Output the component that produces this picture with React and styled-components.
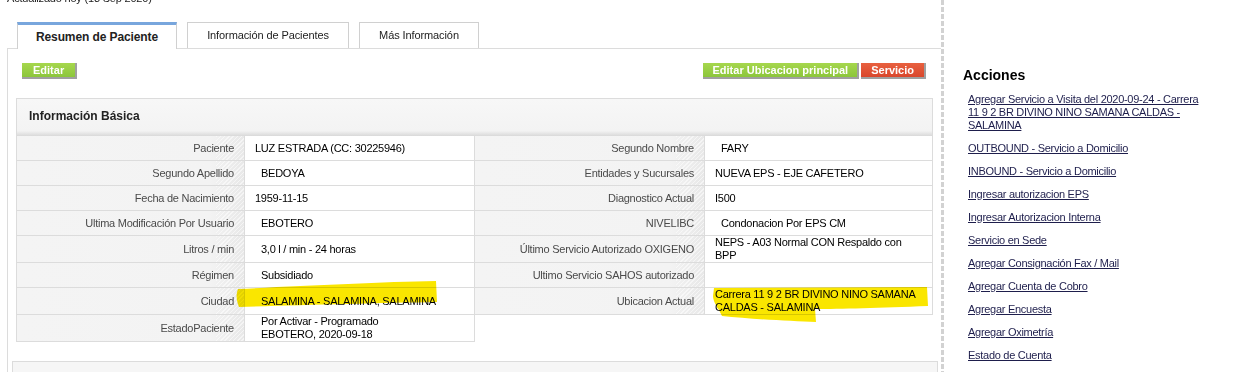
import React from "react";
import styled, { createGlobalStyle } from "styled-components";

const GlobalStyle = createGlobalStyle`
  html, body {
    margin: 0;
    padding: 0;
    background: #fff;
  }
  body {
    font-family: "Liberation Sans", Arial, sans-serif;
    font-size: 11px;
    color: #000;
    overflow: hidden;
  }
`;

const Page = styled.div`
  position: relative;
  display: flex;
  width: 1257px;
  height: 372px;
  overflow: hidden;
`;

const Main = styled.div`
  flex: 0 0 934px;
  padding-left: 7px;
`;

const Updated = styled.div`
  margin-top: -8px;
  line-height: 13px;
  color: #222;
  letter-spacing: -0.2px;
`;

const Tabs = styled.div`
  display: flex;
  align-items: flex-end;
  gap: 10px;
  height: 26px;
  margin: 17px 0 0 10px;
`;

const Tab = styled.div`
  box-sizing: border-box;
  width: ${({ $w }) => $w}px;
  height: ${({ $active }) => ($active ? 27 : 26)}px;
  margin-bottom: ${({ $active }) => ($active ? -1 : 0)}px;
  position: relative;
  z-index: ${({ $active }) => ($active ? 1 : 0)};
  display: flex;
  align-items: center;
  justify-content: center;
  background: #fff;
  border: 1px solid #d0d0d0;
  border-bottom: none;
  border-top: ${({ $active }) => ($active ? "3px solid #78a6dd" : "1px solid #d0d0d0")};
  font-size: ${({ $active }) => ($active ? 12 : 11)}px;
  font-weight: ${({ $active }) => ($active ? "bold" : "normal")};
  letter-spacing: -0.1px;
  color: #222;
  padding-bottom: ${({ $active }) => ($active ? 1 : 2)}px;
`;

const Panel = styled.div`
  border-top: 1px solid #dcdcdc;
  border-left: 1px solid #dcdcdc;
  height: 400px;
`;

const ButtonRow = styled.div`
  display: flex;
  justify-content: space-between;
  padding: 14px 15px 0 14px;
`;

const ButtonGroup = styled.div`
  display: flex;
  gap: 2px;
`;

const Button = styled.div`
  box-sizing: border-box;
  height: 16px;
  line-height: 14px;
  padding: 0 ${({ $pad }) => $pad || 10}px;
  font-size: 11px;
  font-weight: bold;
  color: #fff;
  border-right: 2px solid #a0a0a0;
  border-bottom: 2px solid #a0a0a0;
  background: ${({ $red }) =>
    $red
      ? "linear-gradient(#e8603f, #d9472c)"
      : "linear-gradient(#a6d74d, #8cc63b)"};
`;

const InfoBox = styled.div`
  margin: 19px 8px 0 8px;
`;

const BoxHeader = styled.div`
  box-sizing: border-box;
  height: 38px;
  display: flex;
  align-items: center;
  padding: 0 12px 3px;
  border: 1px solid #dcdcdc;
  border-bottom: none;
  background: linear-gradient(#f7f7f7 0%, #f3f3f3 86%, #e4e4e4 94%, #d9d9d9 100%);
  font-size: 12px;
  font-weight: bold;
  color: #222;
`;

const Grid = styled.div`
  display: grid;
  grid-template-columns: 229px 230px 230px 228px;
  letter-spacing: -0.25px;
`;

const Label = styled.div`
  box-sizing: border-box;
  min-height: 25px;
  display: flex;
  align-items: center;
  justify-content: flex-end;
  padding: 0 10px;
  line-height: 13px;
  color: #4a4a4a;
  text-align: right;
  border-right: 1px solid #dcdcdc;
  border-bottom: 1px solid #dcdcdc;
  border-left: ${({ $first }) => ($first ? "1px solid #dcdcdc" : "none")};
  background:
    repeating-linear-gradient(135deg, rgba(255, 255, 255, 0.55) 0 1px, transparent 1px 3px) right / 28px 100% no-repeat,
    linear-gradient(to right, #f4f4f4 0%, #f3f3f3 85%, #e8e8e8 100%);
`;

const Value = styled.div`
  box-sizing: border-box;
  min-height: 25px;
  display: flex;
  align-items: center;
  padding: 0 14px 0 ${({ $indent }) => ($indent ? 16 : 10)}px;
  line-height: 13px;
  color: #000;
  background: #fff;
  border-right: 1px solid #dcdcdc;
  border-bottom: 1px solid #dcdcdc;
`;

const Empty = styled.div``;

const LowerBox = styled.div`
  margin: 19px 3px 0 4px;
  height: 40px;
  background: #f6f6f6;
  border: 1px solid #dcdcdc;
`;

const Sidebar = styled.div`
  flex: 1;
  padding: 67px 0 0 22px;
  background-image: linear-gradient(to bottom, #d2d2d2 0 5px, transparent 5px 7px);
  background-size: 3px 7px;
  background-repeat: repeat-y;
`;

const SideTitle = styled.div`
  font-size: 14px;
  font-weight: bold;
  line-height: 16px;
  color: #000;
`;

const LinkList = styled.div`
  display: flex;
  flex-direction: column;
  gap: 10px;
  margin-top: 10px;
  padding-left: 5px;
  width: 240px;
`;

const ActionLink = styled.a`
  font-size: 11px;
  line-height: 13px;
  letter-spacing: -0.28px;
  color: #1e1e4c;
  text-decoration: underline;
`;

const Marker = styled.svg`
  position: absolute;
  left: 0;
  top: 0;
  pointer-events: none;
  mix-blend-mode: multiply;
`;

const rows = [
  ["Paciente", "LUZ ESTRADA (CC: 30225946)", false, "Segundo Nombre", "FARY", true],
  ["Segundo Apellido", "BEDOYA", true, "Entidades y Sucursales", "NUEVA EPS - EJE CAFETERO", false],
  ["Fecha de Nacimiento", "1959-11-15", false, "Diagnostico Actual", "I500", false],
  ["Ultima Modificación Por Usuario", "EBOTERO", true, "NIVELIBC", "Condonacion Por EPS CM", true],
  ["Litros / min", "3,0 l / min - 24 horas", true, "Último Servicio Autorizado OXIGENO", "NEPS - A03 Normal CON Respaldo con BPP", false],
  ["Régimen", "Subsidiado", true, "Ultimo Servicio SAHOS autorizado", "", false],
  ["Ciudad", "SALAMINA - SALAMINA, SALAMINA", true, "Ubicacion Actual", "Carrera 11 9 2 BR DIVINO NINO SAMANA CALDAS - SALAMINA", false],
];

const actions = [
  "Agregar Servicio a Visita del 2020-09-24 - Carrera 11 9 2 BR DIVINO NINO SAMANA CALDAS - SALAMINA",
  "OUTBOUND - Servicio a Domicilio",
  "INBOUND - Servicio a Domicilio",
  "Ingresar autorizacion EPS",
  "Ingresar Autorizacion Interna",
  "Servicio en Sede",
  "Agregar Consignación Fax / Mail",
  "Agregar Cuenta de Cobro",
  "Agregar Encuesta",
  "Agregar Oximetría",
  "Estado de Cuenta",
];

const App = () => {
  return (
    <Page>
      <GlobalStyle />
      <Main>
        <Updated>Actualizado hoy (18 Sep 2020)</Updated>
        <Tabs>
          <Tab $active $w={160}>Resumen de Paciente</Tab>
          <Tab $w={162}>Información de Pacientes</Tab>
          <Tab $w={120}>Más Información</Tab>
        </Tabs>
        <Panel>
          <ButtonRow>
            <Button $pad={11}>Editar</Button>
            <ButtonGroup>
              <Button $pad={9}>Editar Ubicacion principal</Button>
              <Button $red>Servicio</Button>
            </ButtonGroup>
          </ButtonRow>
          <InfoBox>
            <BoxHeader>Información Básica</BoxHeader>
            <Grid>
              {rows.map(([l1, v1, i1, l2, v2, i2]) => (
                <React.Fragment key={l1}>
                  <Label $first>{l1}</Label>
                  <Value $indent={i1}>{v1}</Value>
                  <Label>{l2}</Label>
                  <Value $indent={i2}>{v2}</Value>
                </React.Fragment>
              ))}
              <Label $first>EstadoPaciente</Label>
              <Value $indent>
                Por Activar - Programado
                <br />
                EBOTERO, 2020-09-18
              </Value>
              <Empty />
              <Empty />
            </Grid>
          </InfoBox>
          <LowerBox />
        </Panel>
      </Main>
      <Sidebar>
        <SideTitle>Acciones</SideTitle>
        <LinkList>
          {actions.map((a) => (
            <ActionLink key={a} href="#">
              {a}
            </ActionLink>
          ))}
        </LinkList>
      </Sidebar>
      <Marker width="1257" height="372" viewBox="0 0 1257 372">
        <path
          d="M238 289 C300 286 380 282 436 281 L437 302 C380 303 300 305 239 307 C236 300 236 294 238 289 Z"
          fill="#fae600"
        />
        <path
          d="M714 288 L927 287 L928 306 C880 308 840 309 815 309 L816 322 C790 321 750 319 722 316 L719 310 C716 306 713 300 713 296 Z"
          fill="#fae600"
        />
      </Marker>
    </Page>
  );
};

export default App;
